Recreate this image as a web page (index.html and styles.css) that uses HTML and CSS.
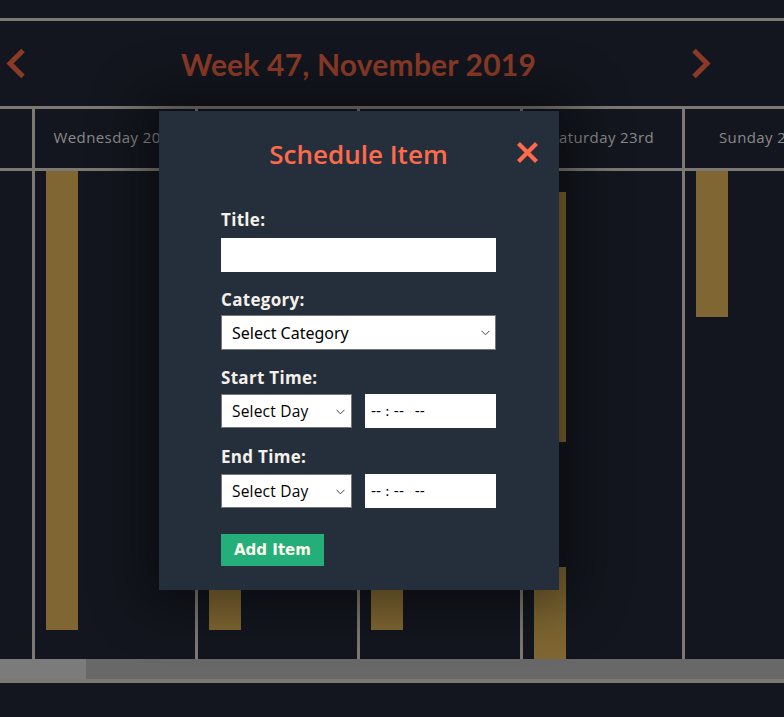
FILE: index.html
```html
<!DOCTYPE html>
<html lang="en">
<head>
<meta charset="utf-8">
<title>Weekly Schedule</title>
<link rel="stylesheet" href="styles.css">
</head>
<body>
<div class="page">
  <div class="top-gap"></div>
  <header class="week-bar">
    <div class="week-inner">
      <button class="nav-btn" aria-label="Previous week">
        <svg width="20" height="31" viewBox="0 0 20 31"><polyline points="17,2.5 4,15.5 17,28.5" fill="none" stroke="#8b3a27" stroke-width="5"/></svg>
      </button>
      <h1 class="week-title">Week 47, November 2019</h1>
      <button class="nav-btn" aria-label="Next week">
        <svg width="20" height="31" viewBox="0 0 20 31"><polyline points="3,2.5 16,15.5 3,28.5" fill="none" stroke="#8b3a27" stroke-width="5"/></svg>
      </button>
    </div>
  </header>

  <div class="calendar">
    <div class="col gutter">
      <div class="day-head"></div>
      <div class="day-body"></div>
    </div>
    <div class="col">
      <div class="day-head">Wednesday 20th</div>
      <div class="day-body"><div class="event" style="margin-top:0;height:459px"></div></div>
    </div>
    <div class="col">
      <div class="day-head">Thursday 21st</div>
      <div class="day-body"><div class="event" style="margin-top:300px;height:159px"></div></div>
    </div>
    <div class="col">
      <div class="day-head">Friday 22nd</div>
      <div class="day-body"><div class="event" style="margin-top:280px;height:179px"></div></div>
    </div>
    <div class="col">
      <div class="day-head">Saturday 23rd</div>
      <div class="day-body">
        <div class="event" style="margin-top:21px;height:250px"></div>
        <div class="event" style="margin-top:125px;height:92px"></div>
      </div>
    </div>
    <div class="col">
      <div class="day-head">Sunday 24th</div>
      <div class="day-body"><div class="event" style="margin-top:0;height:146px"></div></div>
    </div>
  </div>
  <div class="scrollbar"><div class="thumb"></div></div>
  <div class="bottom-line"></div>

  <div class="modal">
    <h2 class="modal-title">Schedule Item</h2>
    <button class="close-btn" aria-label="Close">
      <svg width="23" height="23" viewBox="0 0 23 23"><path d="M2.5 2.5 L20.5 20.5 M20.5 2.5 L2.5 20.5" stroke="#ff6a4b" stroke-width="4.2" fill="none"/></svg>
    </button>
    <form class="form">
      <label class="label first">Title:</label>
      <input class="text-input" type="text">
      <label class="label">Category:</label>
      <span class="select-wrap wide">
        <select class="select category">
          <option>Select Category</option>
        </select>
        <svg class="chev" width="9" height="6" viewBox="0 0 9 6"><polyline points="0.5,0.8 4.5,4.8 8.5,0.8" fill="none" stroke="#444" stroke-width="1"/></svg>
      </span>
      <label class="label start">Start Time:</label>
      <div class="time-row">
        <span class="select-wrap">
          <select class="select day"><option>Select Day</option></select>
          <svg class="chev" width="9" height="6" viewBox="0 0 9 6"><polyline points="0.5,0.8 4.5,4.8 8.5,0.8" fill="none" stroke="#444" stroke-width="1"/></svg>
        </span>
        <input class="time-input" type="time">
      </div>
      <label class="label end">End Time:</label>
      <div class="time-row">
        <span class="select-wrap">
          <select class="select day"><option>Select Day</option></select>
          <svg class="chev" width="9" height="6" viewBox="0 0 9 6"><polyline points="0.5,0.8 4.5,4.8 8.5,0.8" fill="none" stroke="#444" stroke-width="1"/></svg>
        </span>
        <input class="time-input" type="time">
      </div>
      <button type="button" class="add-btn">Add Item</button>
    </form>
  </div>
</div>
</body>
</html>
```

FILE: styles.css
```css
html, body {
  margin: 0;
  padding: 0;
  background: #13161e;
  overflow: hidden;
}

.page {
  position: relative;
  width: 784px;
  height: 717px;
  font-family: "Open Sans", "Noto Sans", sans-serif;
}

.top-gap {
  height: 18px;
}

.week-bar {
  border-top: 3px solid #7d7873;
  border-bottom: 3px solid #7d7873;
  height: 85px;
}

.week-inner {
  width: 717px;
  height: 100%;
  display: flex;
  align-items: center;
  justify-content: space-between;
}

.nav-btn {
  background: none;
  border: none;
  padding: 0 6px;
  margin: 0;
  height: 31px;
  display: flex;
  align-items: center;
  cursor: pointer;
}

.week-title {
  margin: 0;
  font-family: "Lato", "Open Sans", sans-serif;
  font-weight: 700;
  font-size: 30px;
  color: #8b3a27;
  letter-spacing: 0.2px;
}

.calendar {
  display: flex;
  overflow: hidden;
}

.col {
  flex: 0 0 162.5px;
  box-sizing: border-box;
  border-left: 3px solid #7d7873;
}

.col.gutter {
  flex: 0 0 32px;
  border-left: none;
}

.day-head {
  box-sizing: border-box;
  height: 62px;
  padding-bottom: 3px;
  border-bottom: 3px solid #7d7873;
  display: flex;
  align-items: center;
  justify-content: center;
  white-space: nowrap;
  font-size: 15px;
  color: #8a8a8a;
  letter-spacing: 0.4px;
}

.day-body {
  height: 488px;
  display: flex;
  flex-direction: column;
}

.event {
  width: 32px;
  margin-left: 11px;
  background: #7f6632;
  flex: none;
}

.scrollbar {
  height: 20px;
  background: #686868;
}

.thumb {
  width: 86px;
  height: 100%;
  background: #7b7b7b;
}

.bottom-line {
  height: 4px;
  background: #7d7873;
}

.modal {
  position: absolute;
  left: 159px;
  top: 111px;
  width: 400px;
  height: 479px;
  box-sizing: border-box;
  padding: 27px 63px 25px 62px;
  background: #252f3c;
  box-shadow: 0 0 50px 15px rgba(0, 0, 0, 0.45);
}

.modal-title {
  margin: 0;
  text-align: center;
  font-family: "Open Sans", sans-serif;
  font-weight: 600;
  font-size: 26px;
  line-height: 32px;
  color: #ff6a4b;
}

.close-btn {
  position: absolute;
  top: 30px;
  right: 20px;
  width: 23px;
  height: 23px;
  padding: 0;
  border: none;
  background: none;
  cursor: pointer;
  display: block;
}

.close-btn svg {
  display: block;
}

.form {
  display: flex;
  flex-direction: column;
}

.label {
  display: block;
  font-weight: 700;
  font-size: 17px;
  line-height: 20px;
  color: #f4f1ea;
  letter-spacing: 0.3px;
  margin: 18px 0 5px;
}

.label.first {
  margin-top: 40px;
  margin-bottom: 8px;
}

.label.start {
  margin-bottom: 6px;
}

.label.end {
  margin-top: 19px;
  margin-bottom: 7px;
}

.text-input {
  box-sizing: border-box;
  height: 34px;
  width: 275px;
  border: none;
  background: #fff;
  margin: 0;
  padding: 0 8px;
}

.select-wrap {
  position: relative;
  display: block;
  width: 131px;
}

.select-wrap.wide {
  width: 275px;
}

.chev {
  position: absolute;
  right: 7px;
  top: 15px;
  pointer-events: none;
}

.select-wrap.wide .chev {
  right: 6px;
}

.select {
  -webkit-appearance: none;
  appearance: none;
  box-sizing: border-box;
  display: block;
  width: 100%;
  height: 35px;
  border: 1px solid #767676;
  border-radius: 0;
  background: #fff;
  color: #000;
  margin: 0;
  padding: 0 20px 0 10px;
}

.select.category {
  font-family: "Noto Sans", sans-serif;
  font-size: 16px;
}

.select.day {
  height: 34px;
  font-family: "Open Sans", sans-serif;
  font-size: 15.5px;
  letter-spacing: 0.2px;
}

.time-row {
  display: flex;
  gap: 13px;
}

.time-input {
  box-sizing: border-box;
  width: 131px;
  height: 34px;
  border: none;
  background: #fff;
  margin: 0;
  padding: 0 5px;
  font-family: "DejaVu Sans", sans-serif;
  font-size: 14px;
  word-spacing: 6px;
  color: #000;
}

.time-input::-webkit-datetime-edit-text {
  padding: 0 3px;
}

.time-input::-webkit-calendar-picker-indicator {
  display: none;
}

.add-btn {
  align-self: flex-start;
  margin-top: 26px;
  height: 32px;
  padding: 0 13px;
  border: none;
  background: #24ae7a;
  color: #fbf7ea;
  font-family: "DejaVu Sans", sans-serif;
  font-weight: 700;
  font-size: 15px;
  cursor: pointer;
}
```
